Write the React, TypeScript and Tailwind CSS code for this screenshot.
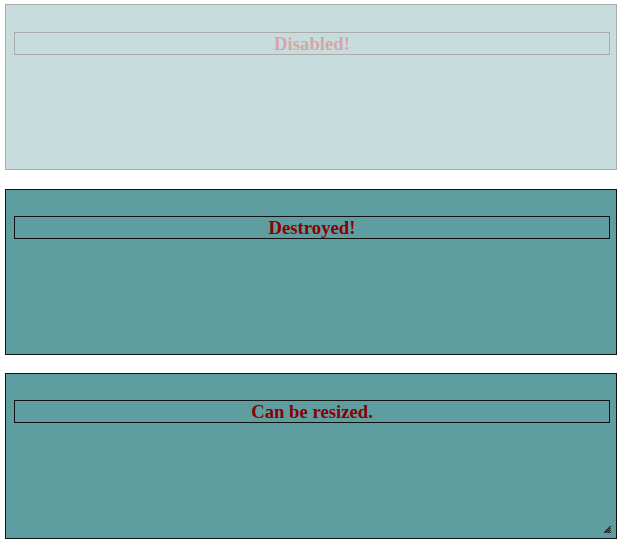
import React from "react";

const h3Cls =
  "box-border w-[596px] h-[23px] border border-[#111] text-center font-bold text-[18.72px] leading-[21px] text-[#8b0000]";

function Grip() {
  const dots: [number, number][] = [];
  for (let y = 0; y < 7; y++) {
    for (let x = 0; x < 7; x++) {
      if (x + y >= 6 && (x + y) % 2 === 0) dots.push([x, y]);
    }
  }
  return (
    <svg
      width="7"
      height="7"
      viewBox="0 0 7 7"
      className="absolute right-[5px] bottom-[5px]"
      shapeRendering="crispEdges"
    >
      {dots.map(([x, y]) => (
        <rect key={`${x}-${y}`} x={x} y={y} width="1" height="1" fill="#222" />
      ))}
      {dots.map(([x, y]) =>
        x > 0 ? (
          <rect key={`b${x}-${y}`} x={x - 1} y={y} width="1" height="1" fill="#333" opacity="0.6" />
        ) : null
      )}
    </svg>
  );
}

export default function App() {
  return (
    <div
      className="bg-white w-[627px] h-[543px] pt-[4px] pl-[5px]"
      style={{ fontFamily: '"Liberation Serif", "Times New Roman", serif' }}
    >
      <div className="box-border w-[612px] h-[166px] border border-[#111] bg-[#5f9ea0] px-2 pt-[27px] opacity-35">
        <h3 className={h3Cls}>Disabled!</h3>
      </div>
      <div className="box-border mt-[19px] w-[612px] h-[166px] border border-[#111] bg-[#5f9ea0] px-2 pt-[26px]">
        <h3 className={h3Cls}>Destroyed!</h3>
      </div>
      <div className="relative box-border mt-[18px] w-[612px] h-[166px] border border-[#111] bg-[#5f9ea0] px-2 pt-[26px]">
        <h3 className={h3Cls}>Can be resized.</h3>
        <Grip />
      </div>
    </div>
  );
}
